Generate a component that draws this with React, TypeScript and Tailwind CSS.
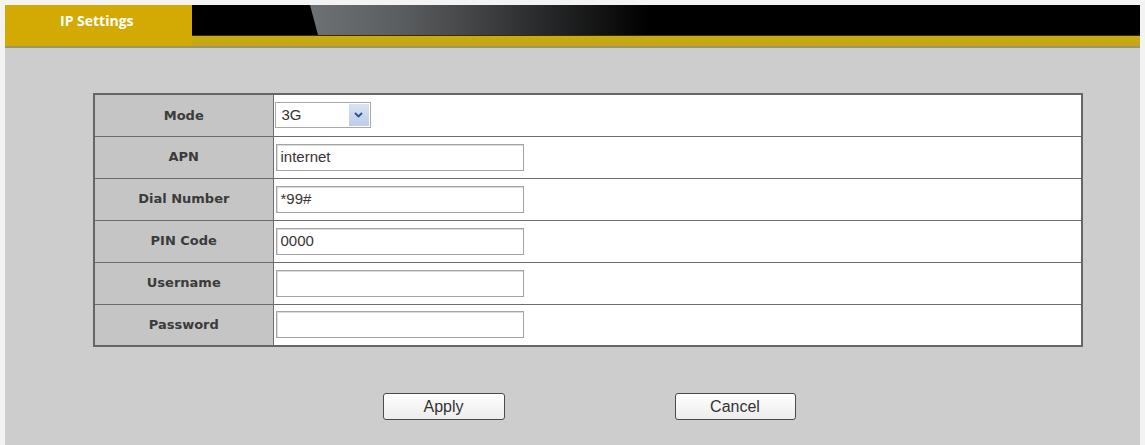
import React from "react";

const rows: { label: string; kind: "select" | "input"; value?: string }[] = [
  { label: "Mode", kind: "select" },
  { label: "APN", kind: "input", value: "internet" },
  { label: "Dial Number", kind: "input", value: "*99#" },
  { label: "PIN Code", kind: "input", value: "0000" },
  { label: "Username", kind: "input", value: "" },
  { label: "Password", kind: "input", value: "" },
];

function Field({ value }: { value: string }) {
  return (
    <div className="ml-[1px] flex h-[27px] w-[248px] items-center border border-[#a4a4a4] bg-white pl-[4px] text-[15px] text-[#3a3333] shadow-[inset_1px_1px_0_#dcdcdc] [font-family:'Liberation_Sans',Arial,sans-serif]">
      {value}
    </div>
  );
}

function ModeSelect() {
  return (
    <div className="flex h-[26px] w-[96px] items-stretch border border-[#a9a9a9] bg-white p-[1px] [font-family:'Liberation_Sans',Arial,sans-serif]">
      <div className="flex flex-1 items-center pl-[5px] text-[15px] text-[#333]">3G</div>
      <div className="flex w-[20px] items-center justify-center bg-[linear-gradient(180deg,#d9e3f3,#bccde8)]">
        <svg width="9" height="6" viewBox="0 0 9 6">
          <path d="M1 1 L4.5 4.5 L8 1" fill="none" stroke="#2c4f8f" strokeWidth="1.8" />
        </svg>
      </div>
    </div>
  );
}

function Btn({ label, w }: { label: string; w: string }) {
  return (
    <div
      className={`flex h-[27px] ${w} items-center justify-center rounded-[3px] border-[1.5px] border-[#4a4a4a] bg-[linear-gradient(180deg,#ffffff,#ececec)] text-[16px] text-[#333] [font-family:'Liberation_Sans',Arial,sans-serif]`}
    >
      {label}
    </div>
  );
}

export default function App() {
  return (
    <div className="h-[445px] w-[1145px] overflow-hidden bg-[#f3f3f3] pl-[5px] pt-[5px]">
      <div className="flex h-[440px] w-[1135px] flex-col bg-[#cdcdcd]">
        {/* header */}
        <div className="flex h-[41px] flex-none">
          <div className="w-[187px] flex-none bg-[#d3aa03]">
            <div className="flex h-[30px] items-center pl-[55px] text-[14px] font-bold text-white [font-family:'Open_Sans',sans-serif]">
              IP Settings
            </div>
          </div>
          <div className="flex flex-1 flex-col">
            <div className="flex h-[30px] bg-black">
              <div className="w-[118px] flex-none" />
              <div className="h-full w-[340px] bg-[linear-gradient(90deg,#6e7173_0%,#5c5f61_25%,#46484a_45%,#262728_70%,#000_100%)] [clip-path:polygon(0_0,100%_0,100%_100%,8px_100%)]" />
            </div>
            <div className="h-[1px] bg-[#3a2a08]" />
            <div className="flex-1 bg-[linear-gradient(180deg,#c9ab12,#c4a617)]" />
          </div>
        </div>
        <div className="h-[2px] flex-none bg-[#9b9866]" />

        {/* content */}
        <div className="flex flex-col pl-[88px] pt-[45px]">
          <table className="w-[990px] border-collapse border-2 border-[#666]">
            <tbody>
              {rows.map((r) => (
                <tr key={r.label} className="h-[42px]">
                  <td className="w-[179px] border-[1.5px] border-[#6c6c6c] bg-[#c5c5c5] p-0 text-center text-[13px] font-bold text-[#3b3b3b] [font-family:'DejaVu_Sans',Verdana,sans-serif]">
                    {r.label}
                  </td>
                  <td className="border-[1.5px] border-[#6c6c6c] bg-white p-0 pl-[1px]">
                    {r.kind === "select" ? <ModeSelect /> : <Field value={r.value ?? ""} />}
                  </td>
                </tr>
              ))}
            </tbody>
          </table>
          <div className="mt-[46px] flex w-[990px] justify-center gap-[170px] pl-[2px]">
            <Btn label="Apply" w="w-[122px]" />
            <Btn label="Cancel" w="w-[121px]" />
          </div>
        </div>
      </div>
    </div>
  );
}
